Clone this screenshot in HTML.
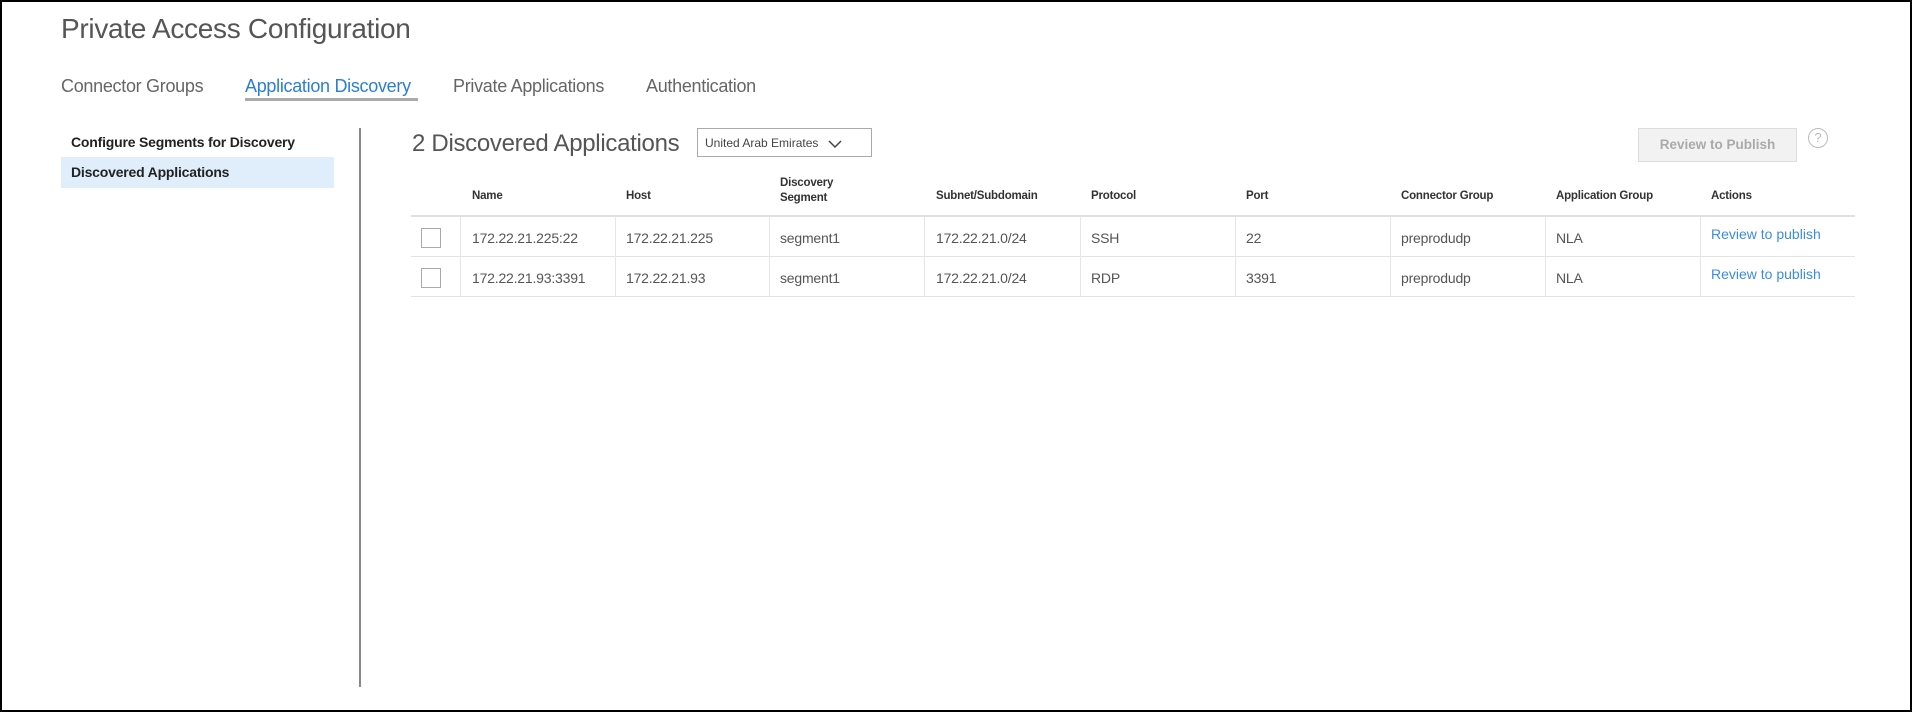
<!DOCTYPE html>
<html><head><meta charset="utf-8"><style>
*{margin:0;padding:0;box-sizing:border-box}
html,body{width:1912px;height:712px;overflow:hidden;background:#fff;font-family:"Liberation Sans",sans-serif}
.frame{position:absolute;left:0;top:0;width:1912px;height:712px;border:2px solid #000}
.a{position:absolute;white-space:nowrap}
.title{left:61px;top:13px;font-size:28px;color:#555;letter-spacing:-0.3px}
.tab{top:76px;font-size:18px;color:#666;letter-spacing:-0.3px}
.ul{left:245px;top:98px;width:173px;height:3px;background:#aaa}
.menu{font-size:14px;color:#222;font-weight:bold;letter-spacing:-0.2px}
.sel{left:61px;top:157px;width:273px;height:31px;background:#e0eefb}
.vd{left:359px;top:128px;width:2px;height:559px;background:#888}
.h2{left:412px;top:130px;font-size:24px;color:#555;letter-spacing:-0.3px}
.dd{left:697px;top:128px;width:175px;height:29px;border:1px solid #aaa;font-size:12px;color:#444;padding:7px 0 0 7px}
.btn{left:1638px;top:128px;width:159px;height:34px;background:#f2f2f2;border:1px solid #ddd;font-size:13.5px;color:#aaa;font-weight:bold;text-align:center;line-height:32px}
.help{left:1808px;top:128px;width:20px;height:20px;border:1.5px solid #bbb;border-radius:50%;color:#bbb;font-size:13px;text-align:center;line-height:17px}
.th{font-size:11.5px;color:#333;font-weight:bold;letter-spacing:-0.2px}
.td{font-size:14px;color:#555;letter-spacing:-0.2px}
.lk{font-size:14px;color:#3b8de0}
.hl{left:411px;height:1px;width:1444px;background:#e3e3e3}
.vl{width:1px;background:#e6e6e6;top:217px;height:79px}
.cb{width:20px;height:20px;border:1px solid #aaa;left:421px}
</style></head><body>
<div class="frame"></div>
<div class="a title">Private Access Configuration</div>
<div class="a tab" style="left:61px">Connector Groups</div>
<div class="a tab" style="left:245px;color:#2a7fd4">Application Discovery</div>
<div class="a tab" style="left:453px">Private Applications</div>
<div class="a tab" style="left:646px">Authentication</div>
<div class="a ul"></div>
<div class="a sel"></div>
<div class="a menu" style="left:71px;top:134px">Configure Segments for Discovery</div>
<div class="a menu" style="left:71px;top:164px">Discovered Applications</div>
<div class="a vd"></div>
<div class="a h2">2 Discovered Applications</div>
<div class="a dd">United Arab Emirates <svg width="14" height="10" style="position:absolute;left:130px;top:10px"><path d="M1 2 L7 8 L13 2" fill="none" stroke="#444" stroke-width="1.5"/></svg></div>
<div class="a btn">Review to Publish</div>
<div class="a help">?</div>

<div class="a th" style="left:472px;top:190px">Name</div>
<div class="a th" style="left:626px;top:190px">Host</div>
<div class="a th" style="left:780px;top:176px;line-height:15px">Discovery<br>Segment</div>
<div class="a th" style="left:936px;top:190px">Subnet/Subdomain</div>
<div class="a th" style="left:1091px;top:190px">Protocol</div>
<div class="a th" style="left:1246px;top:190px">Port</div>
<div class="a th" style="left:1401px;top:190px">Connector Group</div>
<div class="a th" style="left:1556px;top:190px">Application Group</div>
<div class="a th" style="left:1711px;top:190px">Actions</div>

<div class="a hl" style="top:215px;height:2px;background:#e0e0e0"></div>
<div class="a hl" style="top:256px"></div>
<div class="a hl" style="top:296px"></div>
<div class="a vl" style="left:460px"></div>
<div class="a vl" style="left:615px"></div>
<div class="a vl" style="left:769px"></div>
<div class="a vl" style="left:924px"></div>
<div class="a vl" style="left:1080px"></div>
<div class="a vl" style="left:1235px"></div>
<div class="a vl" style="left:1390px"></div>
<div class="a vl" style="left:1545px"></div>
<div class="a vl" style="left:1700px"></div>

<div class="a cb" style="top:228px"></div>
<div class="a cb" style="top:268px"></div>

<div class="a td" style="left:472px;top:230px">172.22.21.225:22</div>
<div class="a td" style="left:626px;top:230px">172.22.21.225</div>
<div class="a td" style="left:780px;top:230px">segment1</div>
<div class="a td" style="left:936px;top:230px">172.22.21.0/24</div>
<div class="a td" style="left:1091px;top:230px">SSH</div>
<div class="a td" style="left:1246px;top:230px">22</div>
<div class="a td" style="left:1401px;top:230px">preprodudp</div>
<div class="a td" style="left:1556px;top:230px">NLA</div>
<div class="a lk" style="left:1711px;top:226px">Review to publish</div>

<div class="a td" style="left:472px;top:270px">172.22.21.93:3391</div>
<div class="a td" style="left:626px;top:270px">172.22.21.93</div>
<div class="a td" style="left:780px;top:270px">segment1</div>
<div class="a td" style="left:936px;top:270px">172.22.21.0/24</div>
<div class="a td" style="left:1091px;top:270px">RDP</div>
<div class="a td" style="left:1246px;top:270px">3391</div>
<div class="a td" style="left:1401px;top:270px">preprodudp</div>
<div class="a td" style="left:1556px;top:270px">NLA</div>
<div class="a lk" style="left:1711px;top:266px">Review to publish</div>
</body></html>
